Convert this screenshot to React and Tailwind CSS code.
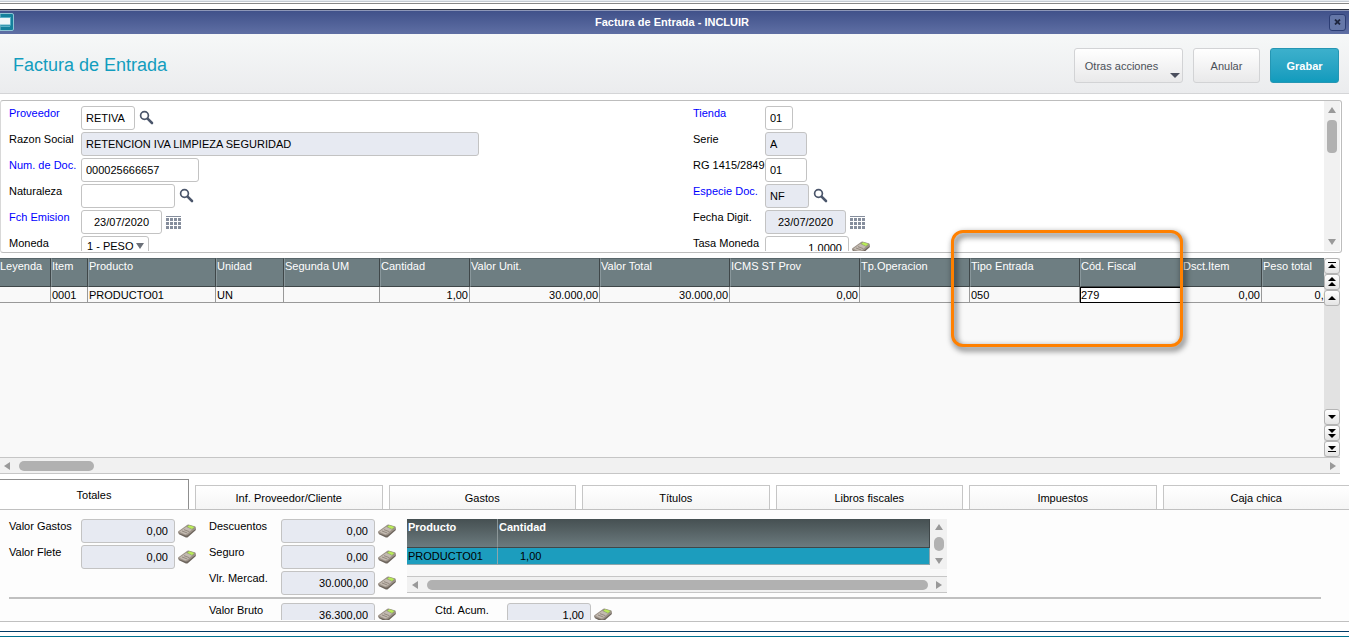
import React from "react";

const FIELD =
  "h-6 rounded-[3px] border border-[#c3c3c3] px-1 text-[11px] text-black outline-none";

function SearchIcon() {
  return (
    <svg width="16" height="16" viewBox="0 0 16 16" fill="none" stroke="#4b566b">
      <circle cx="6.5" cy="5.5" r="3.9" strokeWidth="1.7" />
      <path d="M9.6 8.6 L14 13" strokeWidth="2.6" strokeLinecap="round" />
    </svg>
  );
}

function CalendarIcon() {
  const cols = [1, 5, 9, 13];
  const rows = [4, 8, 12];
  return (
    <svg width="17" height="16" viewBox="0 0 17 16" fill="#858d9c">
      <rect x="1" y="2" width="15" height="1" />
      {rows.map((y) =>
        cols.map((x) => <rect key={x + "-" + y} x={x} y={y} width="3" height="3" />)
      )}
    </svg>
  );
}

function CalculatorIcon() {
  return (
    <svg width="18" height="14" viewBox="0 0 54 42">
      <path d="M0 24 L3 31 L22 40 Q27 42 31 38 L53 19 L54 12 L26 33 Z" fill="#6d655d" />
      <path d="M1 22 L24 5 Q29 1 34 2 L50 7 Q55 9 53 14 L31 32 Q26 36 20 34 L3 28 Q-1 25 1 22 Z" fill="#9d9389" />
      <path d="M4 23 L25 8 L44 15 L27 30 Q24 32 20 31 Z" fill="#c3bab1" />
      <path d="M25 8 L33 3 L51 9 L43 17 Z" fill="#8d9a72" />
      <path d="M28 8 L34 4 L49 9 L42 15 Z" fill="#b9ea58" />
      <path d="M18 17 L34 23 M12 21 L28 27" stroke="#877c72" strokeWidth="2.4" fill="none" />
    </svg>
  );
}

const ICONS = {
  search: [SearchIcon, "Buscar"],
  calendar: [CalendarIcon, "Calendario"],
  calc: [CalculatorIcon, "Calculadora"],
};

function Field({ id, label, value, width, blue, readOnly, align = "text-left", icon, labelWidth = "w-[72px]" }) {
  const [Icon, name] = icon ? ICONS[icon] : [];
  return (
    <div className="flex h-6 items-start">
      <label
        htmlFor={id}
        className={`${labelWidth} shrink-0 whitespace-nowrap leading-[14px] ${blue ? "text-[#0000ff]" : "text-black"}`}
      >
        {label}
      </label>
      <input
        id={id}
        type="text"
        defaultValue={value}
        readOnly={readOnly}
        className={`${FIELD} ${width} ${align} ${readOnly ? "bg-[#e7eaf2]" : "bg-white"}`}
      />
      {Icon && (
        <button type="button" aria-label={`${name} ${label}`} className="ml-[3px] flex h-6 items-center">
          <Icon />
        </button>
      )}
    </div>
  );
}

function Arrow({ dir, color = "#999999" }) {
  const d = {
    up: "M4 0 L8 6 L0 6 Z",
    down: "M0 0 L8 0 L4 6 Z",
    left: "M6 0 L6 8 L0 4 Z",
    right: "M0 0 L6 4 L0 8 Z",
  }[dir];
  const side = dir === "left" || dir === "right";
  return (
    <svg width={side ? 6 : 8} height={side ? 8 : 6} viewBox={side ? "0 0 6 8" : "0 0 8 6"} className="shrink-0">
      <path d={d} fill={color} />
    </svg>
  );
}

const NAV = {
  first: ["Primero", "M4 4h8v1H4z M8 6l4 4H4z"],
  pageUp: ["Página anterior", "M8 3l4 4H4z M8 8l4 4H4z"],
  up: ["Anterior", "M8 6l4 4H4z"],
  down: ["Siguiente", "M4 6h8l-4 4z"],
  pageDown: ["Página siguiente", "M4 4h8l-4 4z M4 9h8l-4 4z"],
  last: ["Último", "M4 5h8l-4 4z M4 10h8v1H4z"],
};

function NavButton({ kind }) {
  const [name, d] = NAV[kind];
  return (
    <button
      type="button"
      aria-label={name}
      className="flex h-4 w-4 items-center justify-center rounded-[3px] border border-[#b4b4b4] bg-linear-to-b from-white to-[#e4e4e4]"
    >
      <svg width="16" height="16" viewBox="0 0 16 16" className="shrink-0">
        <path d={d} fill="#000" />
      </svg>
    </button>
  );
}

const COLUMNS = [
  ["Leyenda", "w-[51px]", "", false],
  ["Item", "w-[37px]", "0001", false],
  ["Producto", "w-[128px]", "PRODUCTO01", false],
  ["Unidad", "w-[68px]", "UN", false],
  ["Segunda UM", "w-[96px]", "", false],
  ["Cantidad", "w-[90px]", "1,00", true],
  ["Valor Unit.", "w-[130px]", "30.000,00", true],
  ["Valor Total", "w-[130px]", "30.000,00", true],
  ["ICMS ST Prov", "w-[130px]", "0,00", true],
  ["Tp.Operacion", "w-[110px]", "", false],
  ["Tipo Entrada", "w-[110px]", "050", false],
  ["Cód. Fiscal", "w-[102px]", "279", false],
  ["Dsct.Item", "w-[80px]", "0,00", true],
  ["Peso total", "w-[76px]", "0,00", true],
];

const TABS = ["Inf. Proveedor/Cliente", "Gastos", "Títulos", "Libros fiscales", "Impuestos", "Caja chica"];

function TitleBar() {
  return (
    <div>
      <div className="h-[9px] bg-white">
        <div className="h-[2px] border-b border-[#c4cbd3] bg-[#e6ebf0]" />
        <div className="mt-px h-px bg-[#868686]" />
      </div>
      <div className="relative flex h-[25px] items-center justify-between border-t border-[#2f3542] bg-linear-to-b from-[#3f5089] to-[#5f6fa4] shadow-[inset_0_1px_0_#8d97b8]">
        <svg width="14" height="18" viewBox="0 0 14 18">
          <path d="M0 0.5h12q1.5 0 1.5 1.5v14q0 1.5 -1.5 1.5H0z" fill="#14809c" stroke="#8fc4d4" />
          <rect x="-1" y="4.5" width="11.5" height="7.5" fill="#f0f6f8" stroke="#5bb0c6" />
          <rect x="0" y="13" width="10" height="1" fill="#5bb0c6" />
        </svg>
        <h2 className="absolute inset-x-0 text-center text-[11px] font-bold text-white">
          <span className="mr-[5px]">Factura de Entrada - INCLUIR</span>
        </h2>
        <button
          type="button"
          aria-label="Cerrar"
          className="relative mr-[3px] flex h-[17px] w-[17px] items-center justify-center rounded-[3px] border border-[#2c3d74] bg-[#6577a8]"
        >
          <svg width="7" height="6" viewBox="0 0 7 6" stroke="#1f2740" strokeWidth="1.8">
            <path d="M1 0.5 L6 5.5 M6 0.5 L1 5.5" />
          </svg>
        </button>
      </div>
    </div>
  );
}

function Header() {
  const base = "h-[35px] rounded-[3px] border pt-[2px] text-[11px]";
  return (
    <header className="flex h-[60px] items-center justify-between border-b border-[#d4d5d7] bg-linear-to-b from-[#f6f8f8] to-[#ebecee] pt-[3px] pr-[10px] pl-[13px]">
      <h1 className="text-[18px] text-[#129dbe]">Factura de Entrada</h1>
      <div className="flex gap-[10px]">
        <button type="button" className={`${base} relative w-[109px] border-[#d2d3d5] bg-linear-to-b from-white to-[#e9e9ea] pr-[14px] text-[#4b5058]`}>
          Otras acciones
          <svg width="10" height="5" viewBox="0 0 10 5" className="absolute right-[2px] bottom-[4px]">
            <path d="M0 0h10L5 5z" fill="#4b4f5e" />
          </svg>
        </button>
        <button type="button" className={`${base} w-[67px] border-[#d2d3d5] bg-linear-to-b from-white to-[#e9e9ea] text-[#4b5058]`}>
          Anular
        </button>
        <button type="button" className={`${base} w-[69px] border-[#2596b3] bg-linear-to-b from-[#3cb0cc] to-[#109bbd] font-bold text-white`}>
          Grabar
        </button>
      </div>
    </header>
  );
}

function InvoiceForm() {
  return (
    <form className="mt-[6px] mr-[7px] flex h-[153px] rounded-[3px] border border-l-[#d8d8d8] border-[#bdbdbd] pr-px pb-px">
      <div className="grid flex-1 grid-cols-[684px_1fr] overflow-hidden pt-[5px] pl-[8px]">
        <div className="flex flex-col gap-[2px]">
          <Field id="proveedor" label="Proveedor" value="RETIVA" width="w-[54px]" blue icon="search" />
          <Field id="razon" label="Razon Social" value="RETENCION IVA LIMPIEZA SEGURIDAD" width="w-[398px]" readOnly />
          <Field id="doc" label="Num. de Doc." value="000025666657" width="w-[118px]" blue />
          <Field id="naturaleza" label="Naturaleza" value="" width="w-[94px]" icon="search" />
          <Field id="emision" label="Fch Emision" value="23/07/2020" width="w-[81px]" align="text-center" blue icon="calendar" />
          <div className="flex h-6 items-start">
            <label htmlFor="moneda" className="w-[72px] shrink-0 leading-[14px]">
              Moneda
            </label>
            <div className="relative">
              <select
                id="moneda"
                className="h-5 w-[68px] appearance-none rounded-[3px] border border-[#c3c3c3] bg-white pl-[5px] text-[11px] outline-none"
              >
                <option>1 - PESO</option>
              </select>
              <div className="pointer-events-none absolute top-[7px] right-[5px]">
                <Arrow dir="down" color="#6b7078" />
              </div>
            </div>
          </div>
        </div>
        <div className="flex flex-col gap-[2px]">
          <Field id="tienda" label="Tienda" value="01" width="w-[28px]" blue />
          <Field id="serie" label="Serie" value="A" width="w-[42px]" readOnly />
          <Field id="rg" label="RG 1415/2849" value="01" width="w-[42px]" />
          <Field id="especie" label="Especie Doc." value="NF" width="w-[44px]" blue readOnly icon="search" />
          <Field id="digit" label="Fecha Digit." value="23/07/2020" width="w-[81px]" align="text-center" readOnly icon="calendar" />
          <Field id="tasa" label="Tasa Moneda" value="1,0000" width="w-[84px]" align="text-right pr-[6px]" icon="calc" />
        </div>
      </div>
      <div className="flex w-4 flex-col items-center bg-[#f1f1f1] py-[6px]">
        <Arrow dir="up" />
        <div className="mt-[7px] h-[33px] w-[10px] rounded-[4px] bg-[#b1b1b1]" />
        <div className="flex-1" />
        <Arrow dir="down" />
      </div>
    </form>
  );
}

function ItemsGrid() {
  return (
    <section className="relative mt-[5px] mr-[9px]">
      <div className="flex h-[199px]">
        <div className="min-w-0 flex-1 overflow-hidden bg-[#f9f9f9]">
          <table className="w-[1338px] table-fixed border-separate border-spacing-0 text-left">
            <thead>
              <tr className="h-[29px]">
                {COLUMNS.map(([name, width]) => (
                  <th
                    key={name}
                    className={`${width} border-t border-r border-b border-l border-t-[#59666a] border-r-[#3f4749] border-b-[#3f4749] border-l-[#89979b] bg-[#6e7e82] p-0 align-top leading-[14px] font-normal whitespace-nowrap text-white first:border-l-0`}
                  >
                    {name}
                  </th>
                ))}
              </tr>
            </thead>
            <tbody>
              <tr className="h-4">
                {COLUMNS.map(([name, , value, right]) => (
                  <td
                    key={name}
                    className={`h-4 p-0 leading-[14px] ${
                      name === "Cód. Fiscal"
                        ? "border border-black bg-white"
                        : "border-r border-b border-[#999999] pt-px pl-px"
                    } ${right ? "pr-px text-right" : ""}`}
                  >
                    {value}
                  </td>
                ))}
              </tr>
            </tbody>
          </table>
        </div>
        <div className="flex w-4 flex-col bg-[#e2e2e2]">
          <NavButton kind="first" />
          <NavButton kind="pageUp" />
          <NavButton kind="up" />
          <div className="flex-1" />
          <NavButton kind="down" />
          <NavButton kind="pageDown" />
          <NavButton kind="last" />
        </div>
      </div>
      <div className="flex h-[17px] items-center border-y border-[#c6c6c6] bg-[#f1f1f1] px-[4px]">
        <Arrow dir="left" />
        <div className="ml-[9px] h-[10px] w-[75px] rounded-[5px] bg-[#b1b1b1]" />
        <div className="flex-1" />
        <Arrow dir="right" />
      </div>
      <div className="pointer-events-none absolute -top-[28px] left-[951px] h-[117px] w-[232px] rounded-[12px] border-[3px] border-[#ff8000] drop-shadow-[2px_3px_3px_rgba(0,0,0,0.8)]" />
    </section>
  );
}

function ProductTable() {
  return (
    <div className="w-[540px]">
      <div className="flex h-[57px] bg-[#f8f8f8]">
        <div className="flex-1">
          <table className="w-full table-fixed border-separate border-spacing-0 text-left">
            <thead>
              <tr className="h-[29px] bg-linear-to-b from-[#465052] to-[#6d7c80] text-white">
                <th className="w-[91px] border-r border-b border-r-[#8b9698] border-b-[#3f4749] p-0 pl-px align-top leading-[17px]">Producto</th>
                <th className="border-r border-b border-[#3f4749] p-0 pl-px align-top leading-[17px]">Cantidad</th>
              </tr>
            </thead>
            <tbody>
              <tr className="h-[17px] bg-[#1c9dbe]">
                <td className="border-r border-b border-[#8da5ab] p-0 pl-px leading-4">PRODUCTO01</td>
                <td className="border-r border-b border-[#8da5ab] p-0 pl-[22px] leading-4">1,00</td>
              </tr>
            </tbody>
          </table>
        </div>
        <div className="flex h-[50px] w-[17px] flex-col items-center bg-[#f1f1f1] py-[5px]">
          <Arrow dir="up" />
          <div className="my-[7px] w-[10px] flex-1 rounded-[5px] bg-[#b1b1b1]" />
          <Arrow dir="down" />
        </div>
      </div>
      <div className="flex h-[17px] items-center border-y border-[#c6c6c6] bg-[#f1f1f1] px-[5px]">
        <Arrow dir="left" />
        <div className="mr-[8px] ml-[9px] h-[10px] flex-1 rounded-[5px] bg-[#b1b1b1]" />
        <Arrow dir="right" />
      </div>
    </div>
  );
}

function Totals() {
  const money = { width: "w-[94px]", align: "text-right pr-[6px]", readOnly: true, icon: "calc" };
  return (
    <section className="mt-[5px]">
      <div role="tablist" className="flex h-[30px] items-end gap-[6px]">
        <button type="button" role="tab" aria-selected="true" className="h-[30px] w-[189px] shrink-0 border-t border-r border-[#8f8f8f] bg-white pt-[2px]">
          Totales
        </button>
        {TABS.map((tab) => (
          <button
            key={tab}
            type="button"
            role="tab"
            aria-selected="false"
            className="h-6 flex-1 border-x border-t border-[#c6c6c6] bg-linear-to-b from-white to-[#f5f5f5] pt-[2px] last:border-r-0"
          >
            {tab}
          </button>
        ))}
      </div>
      <div role="tabpanel" className="h-[113px] border-y border-[#c0c0c0] bg-[#fdfdfd] pb-px">
        <div className="h-full overflow-hidden pt-[9px] pl-[9px]">
          <div className="flex h-[78px]">
            <div className="flex w-[200px] flex-col gap-[2px]">
              <Field id="gastos" label="Valor Gastos" value="0,00" {...money} />
              <Field id="flete" label="Valor Flete" value="0,00" {...money} />
            </div>
            <div className="flex w-[198px] flex-col gap-[2px]">
              <Field id="descuentos" label="Descuentos" value="0,00" {...money} />
              <Field id="seguro" label="Seguro" value="0,00" {...money} />
              <Field id="mercad" label="Vlr. Mercad." value="30.000,00" {...money} />
            </div>
            <ProductTable />
          </div>
          <hr className="mr-[28px] h-[2px] border-0 bg-[#c0c0c0]" />
          <div className="mt-[4px] flex pl-[200px]">
            <div className="w-[226px]">
              <Field id="bruto" label="Valor Bruto" value="36.300,00" {...money} />
            </div>
            <Field id="acum" label="Ctd. Acum." value="1,00" {...money} width="w-[84px]" />
          </div>
        </div>
      </div>
      <div className="mt-[9px] h-[6px] border-t border-b border-t-[#003a66] border-b-[#00718f]" />
    </section>
  );
}

export default function App() {
  return (
    <main className="overflow-hidden bg-white font-['Liberation_Sans',Arial,sans-serif] text-[11px] text-black">
      <TitleBar />
      <Header />
      <InvoiceForm />
      <ItemsGrid />
      <Totals />
    </main>
  );
}
